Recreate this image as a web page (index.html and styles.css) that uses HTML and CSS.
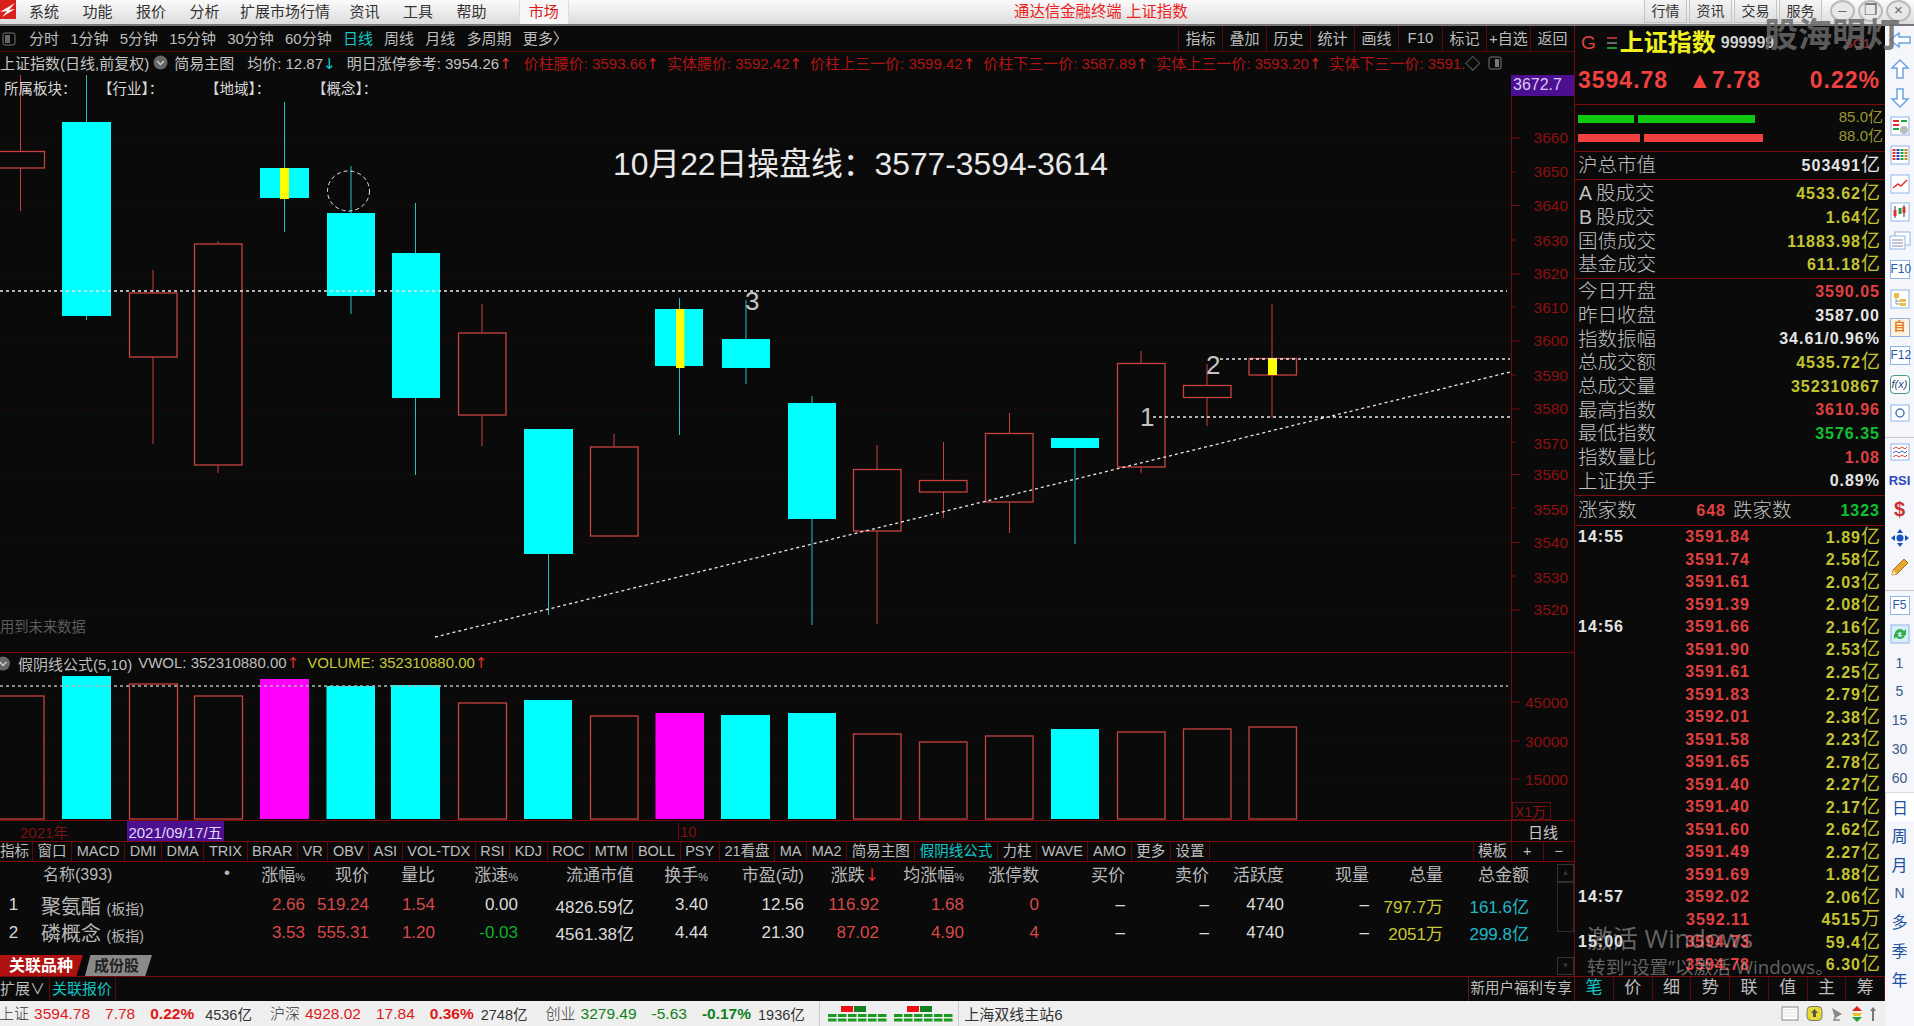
FILE: index.html
```html
<!DOCTYPE html>
<html lang="zh-CN">
<head>
  <meta charset="UTF-8" />
  <title>通达信金融终端 上证指数</title>
  <link rel="stylesheet" href="styles.css">
</head>
<body>
<div class="app">
  <header class="menubar">
    <svg class="logo" width="16" height="19" viewBox="0 0 16 19"><rect width="16" height="19" fill="#d8201c"/><path d="M0 12 L15 3 L9 10 L15 9 L2 17 L7 11 Z" fill="#fff"/></svg>
    <nav class="menu"><span>系统</span><span>功能</span><span>报价</span><span>分析</span><span class="wide">扩展市场行情</span><span>资讯</span><span>工具</span><span>帮助</span></nav>
    <span class="menu-tab">市场</span>
    <span class="app-title">通达信金融终端 上证指数</span>
    <div class="top-btns"><span>行情</span><span>资讯</span><span>交易</span><span>服务</span></div>
    <div class="win-btns"><i>–</i><i>❐</i><i>×</i></div>
  </header>

  <div class="workspace">
    <main class="left">
      <div class="toolbar">
        <svg class="panel-icon" width="14" height="14" viewBox="0 0 14 14"><rect x="1" y="1" width="12" height="12" rx="2" fill="none" stroke="#777"/><rect x="3" y="3" width="5" height="8" fill="#666"/></svg>
        <div class="periods"><span>分时</span><span>1分钟</span><span>5分钟</span><span>15分钟</span><span>30分钟</span><span>60分钟</span><span class="on">日线</span><span>周线</span><span>月线</span><span>多周期</span><span>更多〉</span></div>
        <div class="tools"><span>指标</span><span>叠加</span><span>历史</span><span>统计</span><span>画线</span><span>F10</span><span>标记</span><span>+自选</span><span>返回</span></div>
      </div>

      <div class="infobar">
        <span class="info-name">上证指数(日线,前复权)</span>
        <svg width="15" height="15" viewBox="0 0 15 15"><circle cx="7.5" cy="7.5" r="7" fill="#666"/><path d="M4 6 L7.5 9.5 L11 6" fill="none" stroke="#ccc" stroke-width="1.5"/></svg>
        <span class="info-main">简易主图</span>
        <span>均价: 12.87<b class="cyan">↓</b></span>
        <span class="info-ref">明日涨停参考: 3954.26<b class="red">↑</b></span>
        <span class="dim-red first">价柱腰价: 3593.66<b>↑</b></span>
        <span class="dim-red">实体腰价: 3592.42<b>↑</b></span>
        <span class="dim-red">价柱上三一价: 3599.42<b>↑</b></span>
        <span class="dim-red">价柱下三一价: 3587.89<b>↑</b></span>
        <span class="dim-red">实体上三一价: 3593.20<b>↑</b></span>
        <span class="dim-red cut">实体下三一价: 3591.</span>
        <span class="diamond">◇</span>
        <svg width="14" height="14" viewBox="0 0 14 14"><rect x="1" y="1" width="12" height="12" rx="2" fill="none" stroke="#777"/><rect x="7" y="3" width="4" height="8" fill="#777"/></svg>
        <span class="axis-price">3672.7</span>
      </div>

      <section class="pane-main">
        <div class="sectors"><span>所属板块：</span><span>【行业】：</span><span>【地域】：</span><span>【概念】：</span></div>
        <svg class="chart" width="1575" height="577" viewBox="0 75 1575 577">
          <g class="grid">
            <path d="M0 138H1511M0 205.5H1511M0 274H1511M0 341H1511M0 409H1511M0 474.5H1511M0 542.5H1511M0 610H1511"/>
          </g>
          <g class="axis">
            <path class="axis-line" d="M1511.5 75V652M1512 138h8M1512 172h4M1512 205.5h8M1512 240h4M1512 274h8M1512 307h4M1512 341h8M1512 375h4M1512 409h8M1512 442h4M1512 474.5h8M1512 508h4M1512 542.5h8M1512 576h4M1512 610h8"/>
            <text x="1568" y="143">3660</text><text x="1568" y="177">3650</text><text x="1568" y="211">3640</text><text x="1568" y="246">3630</text><text x="1568" y="279">3620</text><text x="1568" y="313">3610</text><text x="1568" y="346">3600</text><text x="1568" y="381">3590</text><text x="1568" y="414">3580</text><text x="1568" y="449">3570</text><text x="1568" y="480">3560</text><text x="1568" y="515">3550</text><text x="1568" y="548">3540</text><text x="1568" y="583">3530</text><text x="1568" y="615">3520</text>
          </g>
          <g class="wick-up">
            <path d="M20.5 75V151M20.5 168V211M153 270V293M153 357V444M218 241V244M218 465V473M482 304V333M482 415V446M614 434V447M877 445V469M877 531V624M943.5 442V480M943.5 492V518M1009.5 413V433M1009.5 502V533M1141 351V363M1141 467V473M1207 364V385M1207 397V426M1272 304V358M1272 375V418"/>
          </g>
          <g class="wick-down">
            <path d="M86.5 75V122M86.5 316V320M284.5 102V168M284.5 198V232M351 166V213M351 296V314M415.5 203V253M415.5 398V475M548.5 554V615M679.5 298V309M679.5 366V435M746 300V339M746 368V384M812 396V403M812 519V625M1075 447V544"/>
          </g>
          <g class="body-up">
            <rect x="-5" y="151.5" width="49.5" height="16.5"/><rect x="129.5" y="293" width="47.5" height="64"/><rect x="194.5" y="244" width="47.5" height="221"/><rect x="458.5" y="333" width="47.5" height="82"/><rect x="590.5" y="447" width="47.5" height="89"/><rect x="853.5" y="469.5" width="47.5" height="61.5"/><rect x="919.5" y="480.5" width="47.5" height="11.5"/><rect x="985.5" y="433.5" width="47.5" height="68.5"/><rect x="1117.5" y="363.5" width="47.5" height="103.5"/><rect x="1183.5" y="385.5" width="47.5" height="12"/><rect x="1249" y="358.5" width="47.5" height="16.5"/>
          </g>
          <g class="body-down">
            <rect x="62" y="122" width="49" height="194"/><rect x="260" y="168" width="49" height="30"/><rect x="327" y="213" width="48" height="83"/><rect x="392" y="253" width="48" height="145"/><rect x="524" y="429" width="49" height="125"/><rect x="655" y="309" width="48" height="57"/><rect x="722" y="339" width="48" height="29"/><rect x="788" y="403" width="48" height="116"/><rect x="1051" y="438" width="48" height="10"/>
          </g>
          <g class="mark">
            <rect x="280" y="168" width="9" height="31"/><rect x="676" y="309" width="8.5" height="59"/><rect x="1268" y="358" width="9" height="17"/>
          </g>
          <g class="dash">
            <path d="M0 291H1507M1220 359H1510M1153 417H1511M435 637L1510 372"/>
            <ellipse class="thin" cx="348.5" cy="191" rx="21" ry="20"/>
          </g>
          <text class="note" x="613" y="175">10月22日操盘线：3577-3594-3614</text>
          <g class="num"><text x="745" y="310">3</text><text x="1206" y="374">2</text><text x="1140" y="426">1</text></g>
        </svg>
        <span class="future">用到未来数据</span>
      </section>

      <section class="pane-sub">
        <div class="sub-head">
          <svg width="12" height="15" viewBox="0 0 12 15"><circle cx="3" cy="7.5" r="7" fill="#666"/><path d="M0 6 L3 9.5 L6.5 6" fill="none" stroke="#ccc" stroke-width="1.5"/></svg>
          <span>假阴线公式(5,10)</span>
          <span>VWOL: 352310880.00<b class="red">↑</b></span>
          <span class="olive">VOLUME: 352310880.00<b class="red">↑</b></span>
        </div>
        <svg class="chart" width="1575" height="167" viewBox="0 653 1575 167">
          <g class="grid"><path d="M0 702H1511M0 741H1511M0 779H1511"/></g>
          <g class="axis">
            <path class="axis-line" d="M1511.5 653V820M1512 702h8M1512 741h8M1512 779h8"/>
            <text x="1568" y="708">45000</text><text x="1568" y="747">30000</text><text x="1568" y="785">15000</text>
            <text class="unit" x="1515" y="817">X1万</text>
            <rect class="unit-box" x="1512.5" y="802.5" width="38" height="17"/>
          </g>
          <g class="body-up">
            <rect x="-5" y="696" width="49" height="123"/><rect x="129.5" y="684" width="48" height="135"/><rect x="194.5" y="696" width="48" height="123"/><rect x="458.5" y="703" width="48" height="116"/><rect x="590.5" y="716" width="47.5" height="103"/><rect x="853.5" y="734" width="47.5" height="85"/><rect x="919.5" y="742" width="47.5" height="77"/><rect x="985.5" y="736" width="47.5" height="83"/><rect x="1117.5" y="732" width="47.5" height="87"/><rect x="1183.5" y="729" width="47.5" height="90"/><rect x="1249" y="727" width="47.5" height="92"/>
          </g>
          <g class="body-down">
            <rect x="62" y="676" width="49" height="143"/><rect x="326.5" y="686" width="48.5" height="133"/><rect x="391" y="685" width="49" height="134"/><rect x="524" y="700" width="48" height="119"/><rect x="721" y="715" width="49" height="104"/><rect x="788" y="713" width="48" height="106"/><rect x="1051" y="729" width="48" height="90"/>
          </g>
          <g class="body-pink"><rect x="260" y="679" width="49" height="140"/><rect x="655.5" y="713" width="48.5" height="106"/></g>
          <path class="dash grey" d="M0 686H1508"/>
        </svg>
      </section>

      <div class="dates">
        <span class="year">2021年</span>
        <span class="cursor-date">2021/09/17/五</span>
        <span class="month">10</span>
        <span class="date-kind">日线</span>
      </div>

      <div class="tabs">
        <div class="tab-list">
          <span class="t-lead">指标</span><span>窗口</span><span>MACD</span><span>DMI</span><span>DMA</span><span>TRIX</span><span>BRAR</span><span>VR</span><span>OBV</span><span>ASI</span><span>VOL-TDX</span><span>RSI</span><span>KDJ</span><span>ROC</span><span>MTM</span><span>BOLL</span><span>PSY</span><span>21看盘</span><span>MA</span><span>MA2</span><span>简易主图</span><span class="on">假阴线公式</span><span>力柱</span><span>WAVE</span><span>AMO</span><span>更多</span><span>设置</span>
        </div>
        <div class="tab-right"><span>模板</span><span>+</span><span>−</span></div>
      </div>

      <div class="list">
        <div class="list-main">
          <div class="grid-table">
            <span class="th c">&nbsp;</span><span class="th name">名称(393)</span><span class="th">•</span><span class="th">涨幅<small>%</small></span><span class="th">现价</span><span class="th">量比</span><span class="th">涨速<small>%</small></span><span class="th">流通市值</span><span class="th">换手<small>%</small></span><span class="th">市盈(动)</span><span class="th">涨跌<b class="red">↓</b></span><span class="th">均涨幅<small>%</small></span><span class="th">涨停数</span><span class="th">买价</span><span class="th">卖价</span><span class="th">活跃度</span><span class="th">现量</span><span class="th">总量</span><span class="th">总金额</span>

            <span class="c">1</span><span class="name-cell">聚氨酯 <small>(板指)</small></span><span></span><span class="r">2.66</span><span class="r">519.24</span><span class="r">1.54</span><span class="w">0.00</span><span class="w">4826.59<i>亿</i></span><span class="w">3.40</span><span class="w">12.56</span><span class="r">116.92</span><span class="r">1.68</span><span class="r">0</span><span class="w">–</span><span class="w">–</span><span class="w">4740</span><span class="w">–</span><span class="y">797.7<i>万</i></span><span class="b">161.6<i>亿</i></span>

            <span class="c">2</span><span class="name-cell">磷概念 <small>(板指)</small></span><span></span><span class="r">3.53</span><span class="r">555.31</span><span class="r">1.20</span><span class="g">-0.03</span><span class="w">4561.38<i>亿</i></span><span class="w">4.44</span><span class="w">21.30</span><span class="r">87.02</span><span class="r">4.90</span><span class="r">4</span><span class="w">–</span><span class="w">–</span><span class="w">4740</span><span class="w">–</span><span class="y">2051<i>万</i></span><span class="b">299.8<i>亿</i></span>
          </div>
          <div class="rel-tabs"><span class="rel-on">关联品种</span><span class="rel-off">成份股</span></div>
        </div>
        <div class="scroll"><i>▲</i><em></em><i>▼</i></div>
      </div>

      <div class="extras">
        <span>扩展∨</span><span class="on">关联报价</span>
        <span class="promo">新用户福利专享</span>
      </div>
    </main>

    <aside class="quote">
      <div class="q-title">
        <span class="q-g">G</span>
        <svg width="12" height="14" viewBox="0 0 12 14"><path d="M1 2H11" stroke="#e04040" stroke-width="1.5"/><path d="M1 7H11" stroke="#888" stroke-width="1.5"/><path d="M1 12H11" stroke="#20c040" stroke-width="1.5"/></svg>
        <span class="q-name">上证指数</span>
        <span class="q-code">999999</span>
        <span class="q-tag">SG1</span>
      </div>
      <div class="q-price"><span>3594.78</span><span class="q-change">▲7.78</span><span>0.22%</span></div>
      <div class="q-bars">
        <div class="bar-row"><i class="green w56"></i><i class="green w117"></i><span>85.0<em>亿</em></span></div>
        <div class="bar-row"><i class="redbar w62"></i><i class="redbar w119"></i><span>88.0<em>亿</em></span></div>
      </div>
      <div class="q-sec one"><div class="q-row"><label>沪总市值</label><span class="wh">503491<em>亿</em></span></div></div>
      <div class="q-sec four">
        <div class="q-row"><label><tt>A</tt>股成交</label><span class="yl">4533.62<em>亿</em></span></div>
        <div class="q-row"><label><tt>B</tt>股成交</label><span class="yl">1.64<em>亿</em></span></div>
        <div class="q-row"><label>国债成交</label><span class="yl">11883.98<em>亿</em></span></div>
        <div class="q-row"><label>基金成交</label><span class="yl">611.18<em>亿</em></span></div>
      </div>
      <div class="q-sec nine">
        <div class="q-row"><label>今日开盘</label><span class="rd">3590.05</span></div>
        <div class="q-row"><label>昨日收盘</label><span class="wh">3587.00</span></div>
        <div class="q-row"><label>指数振幅</label><span class="wh">34.61/0.96%</span></div>
        <div class="q-row"><label>总成交额</label><span class="yl">4535.72<em>亿</em></span></div>
        <div class="q-row"><label>总成交量</label><span class="yl">352310867</span></div>
        <div class="q-row"><label>最高指数</label><span class="rd">3610.96</span></div>
        <div class="q-row"><label>最低指数</label><span class="gr">3576.35</span></div>
        <div class="q-row"><label>指数量比</label><span class="rd">1.08</span></div>
        <div class="q-row"><label>上证换手</label><span class="wh">0.89%</span></div>
      </div>
      <div class="q-sec updown"><label>涨家数</label><span class="rd">648</span><label class="fall">跌家数</label><span class="gr">1323</span></div>
      <div class="ticks">
        <div class="tick"><span>14:55</span><span>3591.84</span><span>1.89<em>亿</em></span></div>
        <div class="tick"><span></span><span>3591.74</span><span>2.58<em>亿</em></span></div>
        <div class="tick"><span></span><span>3591.61</span><span>2.03<em>亿</em></span></div>
        <div class="tick"><span></span><span>3591.39</span><span>2.08<em>亿</em></span></div>
        <div class="tick minute"><span>14:56</span><span>3591.66</span><span>2.16<em>亿</em></span></div>
        <div class="tick"><span></span><span>3591.90</span><span>2.53<em>亿</em></span></div>
        <div class="tick"><span></span><span>3591.61</span><span>2.25<em>亿</em></span></div>
        <div class="tick"><span></span><span>3591.83</span><span>2.79<em>亿</em></span></div>
        <div class="tick"><span></span><span>3592.01</span><span>2.38<em>亿</em></span></div>
        <div class="tick"><span></span><span>3591.58</span><span>2.23<em>亿</em></span></div>
        <div class="tick"><span></span><span>3591.65</span><span>2.78<em>亿</em></span></div>
        <div class="tick"><span></span><span>3591.40</span><span>2.27<em>亿</em></span></div>
        <div class="tick"><span></span><span>3591.40</span><span>2.17<em>亿</em></span></div>
        <div class="tick"><span></span><span>3591.60</span><span>2.62<em>亿</em></span></div>
        <div class="tick"><span></span><span>3591.49</span><span>2.27<em>亿</em></span></div>
        <div class="tick"><span></span><span>3591.69</span><span>1.88<em>亿</em></span></div>
        <div class="tick minute"><span>14:57</span><span>3592.02</span><span>2.06<em>亿</em></span></div>
        <div class="tick"><span></span><span>3592.11</span><span>4515<em>万</em></span></div>
        <div class="tick minute"><span>15:00</span><span>3594.73</span><span>59.4<em>亿</em></span></div>
        <div class="tick"><span></span><span>3594.78</span><span>6.30<em>亿</em></span></div>
      </div>
      <div class="q-tabs"><span class="on">笔</span><span>价</span><span>细</span><span>势</span><span>联</span><span>值</span><span>主</span><span>筹</span></div>
    </aside>

    <nav class="side">
      <a><svg width="24" height="20" viewBox="0 0 24 20"><path d="M2 10L11 3V7H22V13H11V17Z" fill="#fff" stroke="#6ea2e0" stroke-width="1.5"/></svg></a>
      <a><svg width="20" height="22" viewBox="0 0 20 22"><path d="M10 2L18 10H13V20H7V10H2Z" fill="#fff" stroke="#6ea2e0" stroke-width="1.5"/></svg></a>
      <a><svg width="20" height="22" viewBox="0 0 20 22"><path d="M10 20L18 12H13V2H7V12H2Z" fill="#fff" stroke="#6ea2e0" stroke-width="1.5"/></svg></a>
      <a><svg width="20" height="20" viewBox="0 0 20 20"><rect x="1" y="1" width="18" height="18" fill="#fff" stroke="#8fb4e8"/><path d="M3 5H9M3 9H9" stroke="#e03030" stroke-width="2"/><path d="M3 13H9M11 5H17" stroke="#20a040" stroke-width="2"/><circle cx="14" cy="14" r="4" fill="#bbb"/></svg></a>
      <a><svg width="20" height="20" viewBox="0 0 20 20"><rect x="1" y="1" width="18" height="18" fill="#fff" stroke="#8fb4e8"/><path d="M4 4V16" stroke="#e03030" stroke-width="3" stroke-dasharray="2 1"/><path d="M8 4V16" stroke="#2040c0" stroke-width="3" stroke-dasharray="2 1"/><path d="M12 4V16" stroke="#20a040" stroke-width="3" stroke-dasharray="2 1"/><path d="M16 4V16" stroke="#d08020" stroke-width="3" stroke-dasharray="2 1"/></svg></a>
      <a><svg width="20" height="20" viewBox="0 0 20 20"><rect x="1" y="1" width="18" height="18" fill="#fff" stroke="#8fb4e8"/><path d="M3 14L8 10L11 12L17 6" fill="none" stroke="#e03030" stroke-width="1.5"/></svg></a>
      <a><svg width="20" height="20" viewBox="0 0 20 20"><rect x="1" y="1" width="18" height="18" fill="#fff" stroke="#8fb4e8"/><path d="M5 4V16M14 3V15" stroke="#333"/><rect x="3.5" y="8" width="3" height="6" fill="#e03030"/><rect x="8.5" y="6" width="3" height="6" fill="#20a040"/><rect x="12.5" y="5" width="3" height="6" fill="#e03030"/></svg></a>
      <a><svg width="22" height="20" viewBox="0 0 22 20"><rect x="6" y="1" width="15" height="13" fill="#fff" stroke="#8fb4e8"/><rect x="1" y="5" width="15" height="13" fill="#fff" stroke="#8fb4e8"/><path d="M3 9H14M3 12H14M3 15H14" stroke="#88a" /></svg></a>
      <a><span class="ibox">F10</span></a>
      <a><svg width="20" height="20" viewBox="0 0 20 20"><rect x="1" y="1" width="18" height="18" fill="#fff" stroke="#8fb4e8"/><rect x="4" y="4" width="5" height="5" fill="#e8c040"/><path d="M6 9V15H10M6 12H10" fill="none" stroke="#999"/><rect x="10" y="10" width="6" height="3" fill="#e8c040"/><rect x="10" y="14" width="6" height="3" fill="#e8c040"/></svg></a>
      <a><span class="ibox zi">自</span></a>
      <a><span class="ibox">F12</span></a>
      <a><span class="ibox fx">f(x)</span></a>
      <a><svg width="20" height="18" viewBox="0 0 20 18"><rect x="1" y="1" width="18" height="16" fill="#fff" stroke="#8fb4e8"/><circle cx="10" cy="9" r="4" fill="none" stroke="#4a78b8" stroke-width="1.5"/></svg></a>
      <hr>
      <a><svg width="20" height="18" viewBox="0 0 20 18"><rect x="1" y="1" width="18" height="16" fill="#fff" stroke="#8fb4e8"/><path d="M3 6L6 4L9 6L12 4L15 6L17 4" fill="none" stroke="#e04040"/><path d="M3 10L6 8L9 10L12 8L15 10L17 8" fill="none" stroke="#4060c0"/><path d="M3 14L6 12L9 14L12 12L15 14L17 12" fill="none" stroke="#e04040"/></svg></a>
      <a class="rsi">RSI</a>
      <a class="dollar">$</a>
      <a><svg width="20" height="20" viewBox="0 0 20 20"><path d="M10 1L13 5H7ZM10 19L13 15H7ZM1 10L5 7V13ZM19 10L15 7V13Z" fill="#1a50c0"/><circle cx="10" cy="10" r="3.5" fill="#1a50c0"/></svg></a>
      <a><svg width="20" height="20" viewBox="0 0 20 20"><path d="M2 18L3 13L14 2L18 6L7 17Z" fill="#e8a830" stroke="#a87018"/><path d="M2 18L3 13L7 17Z" fill="#f6e0b0"/></svg></a>
      <hr>
      <a><span class="ibox">F5</span></a>
      <a><svg width="20" height="20" viewBox="0 0 20 20"><rect x="1" y="1" width="18" height="18" fill="#d8eef8" stroke="#8fb4e8"/><path d="M5 10A5 5 0 0 1 14 7L16 5V11H10L12 9A3 3 0 0 0 7 11Z" fill="#30b050"/><path d="M15 10A5 5 0 0 1 6 13L4 15V10H9L8 12A3 3 0 0 0 13 10Z" fill="#30b050"/></svg></a>
      <a class="p">1</a><a class="p">5</a><a class="p">15</a><a class="p">30</a><a class="p">60</a>
      <a class="p cn active">日</a><a class="p cn">周</a><a class="p cn">月</a><a class="p">N</a><a class="p cn">多</a><a class="p cn">季</a><a class="p cn">年</a>
    </nav>

    <footer class="status">
      <div class="idx first-idx"><label>上证</label><span class="r">3594.78</span><span class="r">7.78</span><b class="r">0.22%</b><em>4536亿</em></div>
      <div class="idx tight"><label>沪深</label><span class="r">4928.02</span><span class="r">17.84</span><b class="r">0.36%</b><em>2748亿</em></div>
      <div class="idx tight"><label>创业</label><span class="g">3279.49</span><span class="g">-5.63</span><b class="g">-0.17%</b><em>1936亿</em></div>
      <div class="meter">
        <svg width="126" height="16" viewBox="0 0 126 16">
          <g id="lvl"><rect x="13" y="0" width="12" height="6" fill="#ee1010"/><rect x="26" y="0" width="12" height="6" fill="#108020"/><path d="M0 9.5H59M0 14H59" stroke="#1a9a20" stroke-width="3" stroke-dasharray="8.5 1.5"/></g>
          <use href="#lvl" x="66"/>
        </svg>
      </div>
      <span class="station">上海双线主站6</span>
      <div class="tray">
        <svg width="18" height="15" viewBox="0 0 18 15"><rect x="1" y="1" width="16" height="13" fill="#fff" stroke="#888"/><path d="M1 4H17M1 7H17M1 10H17" stroke="#ddd"/></svg>
        <svg width="17" height="15" viewBox="0 0 17 15"><rect x="1" y="0.5" width="15" height="14" rx="4" fill="#e8d838" stroke="#777"/><path d="M8.5 3L12 7H10V11H7V7H5Z" fill="#554"/></svg>
        <svg width="14" height="15" viewBox="0 0 14 15"><path d="M2 2L12 8L5 12Z" fill="#888"/><path d="M6 9L4 14H10" fill="none" stroke="#888" stroke-width="1.5"/></svg>
        <svg width="12" height="16" viewBox="0 0 12 16"><path d="M6 0L11 5H1Z" fill="#e02020"/><path d="M1 7H11L9 10H3Z" fill="#e8c020"/><path d="M6 16L1 11H11Z" fill="#20a040"/></svg>
        <svg width="6" height="14" viewBox="0 0 6 14"><path d="M3 0L6 4H4V14H2V4H0Z" fill="#777"/></svg>
      </div>
    </footer>
  </div>

  <div class="watermark">股海明灯</div>
  <div class="activate"><p class="a1">激活 Windows</p><p class="a2">转到“设置”以激活 Windows。</p></div>
</div>
</body>
</html>
```

FILE: styles.css
```css
* {
  box-sizing: border-box;
}
body {
  margin: 0;
  background: #0a0a0a;
  font-family: "Liberation Sans", "Noto Sans CJK SC", sans-serif;
  color: #d8d8d8;
  overflow: hidden;
}
p {
  margin: 0;
}
.app {
  position: relative;
  width: 1914px;
  height: 1026px;
  overflow: hidden;
}

/* top menu */
.menubar {
  display: flex;
  align-items: center;
  height: 26px;
  background: linear-gradient(#fbfbfb, #dcdcdc);
  border-bottom: 2px solid #777;
  color: #333;
  font-size: 15px;
}
.logo {
  flex: none;
  align-self: flex-start;
}
.menu {
  display: flex;
  gap: 23.5px;
  margin-left: 13px;
  padding-bottom: 3px;
}
.menu .wide {
  margin: 0 -4px 0 -3px;
}
.menu-tab {
  display: flex;
  align-items: center;
  height: 24px;
  margin-left: 32px;
  padding: 0 9px 3px;
  background: #f8f8f8;
  border: 1px solid #ddd;
  border-width: 0 1px;
  color: #d81818;
}
.app-title {
  position: absolute;
  left: 1014px;
  top: -1px;
  color: #ee2020;
  font-size: 15.4px;
}
.top-btns {
  position: absolute;
  left: 1644px;
  top: 0;
  display: flex;
  gap: 2px;
}
.top-btns span {
  width: 43px;
  height: 23px;
  text-align: center;
  line-height: 22px;
  font-size: 14px;
  background: linear-gradient(#f4f4f4, #dedede);
  border: 1px solid #c4c4c4;
  border-top: 0;
}
.win-btns {
  position: absolute;
  left: 1830px;
  top: 0;
  display: flex;
  gap: 3px;
}
.win-btns i {
  width: 25px;
  height: 22px;
  border: 2px solid #bbb;
  border-radius: 50%;
  font-style: normal;
  text-align: center;
  line-height: 16px;
  font-size: 15px;
  color: #666;
  background: #e8e8e8;
}

/* layout */
.workspace {
  display: grid;
  grid-template-columns: 1575px 310px 29px;
  grid-template-rows: 975px 25px;
}
.left {
  grid-row: 1;
  grid-column: 1;
  display: flex;
  flex-direction: column;
  border-right: 1px solid #7a0b0b;
  min-width: 0;
}
.quote {
  grid-row: 1;
  grid-column: 2;
  display: flex;
  flex-direction: column;
}
.side {
  grid-row: 1 / 3;
  grid-column: 3;
}
.status {
  grid-row: 2;
  grid-column: 1 / 3;
}

/* toolbar */
.toolbar {
  display: flex;
  align-items: center;
  flex: none;
  height: 26px;
  border-bottom: 1px solid #5a0808;
  font-size: 15px;
  color: #bdbdbd;
}
.panel-icon {
  margin-left: 2px;
}
.periods {
  display: flex;
  gap: 11.2px;
  margin-left: 13px;
  padding-bottom: 2px;
}
.periods .on,
.tab-list .on,
.extras .on,
.q-tabs .on {
  color: #10c8c8;
}
.tools {
  display: grid;
  grid-template-columns: repeat(9, 44px);
  margin-left: auto;
  height: 100%;
}
.tools span {
  display: flex;
  align-items: center;
  justify-content: center;
  padding-bottom: 2px;
  border-left: 1px solid #5a0808;
}

.infobar {
  position: relative;
  display: flex;
  align-items: center;
  gap: 8px;
  flex: none;
  height: 23px;
  padding: 0 68px 2px 0;
  font-size: 15px;
  white-space: nowrap;
  color: #c4c4c4;
}
.infobar svg {
  flex: none;
}
.info-name {
  margin-right: -4px;
}
.info-main {
  margin-left: -2px;
  margin-right: 5px;
}
.info-ref {
  margin-left: 3px;
}
.infobar .first {
  margin-left: 4px;
}
.infobar b,
.sub-head b,
.th b {
  font-weight: normal;
  font-family: "DejaVu Sans", sans-serif;
}
.red {
  color: #e03030;
}
.cyan {
  color: #10d0d0;
}
.olive {
  color: #c8c832;
}
.dim-red {
  color: #b01414;
}
.dim-red b {
  color: #d02020;
}
.diamond {
  margin-left: -8px;
  color: #888;
}
.axis-price {
  position: absolute;
  right: 0;
  top: 23px;
  z-index: 2;
  width: 63px;
  height: 21px;
  padding-left: 2px;
  background: #4b0f8f;
  color: #d8c8f8;
  font-size: 16px;
  line-height: 20px;
}

/* chart panes */
.pane-main,
.pane-sub {
  position: relative;
  flex: none;
  border-bottom: 1px solid #7a0b0b;
}
.pane-main {
  height: 578px;
}
.pane-sub {
  height: 168px;
}
.chart {
  display: block;
}
.grid path {
  fill: none;
  stroke: #4a0c0c;
  stroke-dasharray: 1 4;
}
.axis-line {
  fill: none;
  stroke: #7a0b0b;
}
.axis text {
  fill: #8c1010;
  font-size: 15.5px;
  text-anchor: end;
}
.axis .unit {
  text-anchor: start;
  font-size: 14px;
}
.unit-box {
  fill: none;
  stroke: #5a1010;
}
.wick-up path {
  fill: none;
  stroke: #c84040;
}
.wick-down path {
  fill: none;
  stroke: #1cc4c4;
}
.body-up rect {
  fill: #0a0a0a;
  stroke: #c84040;
  stroke-width: 1.3;
}
.body-down rect {
  fill: #00ffff;
}
.body-pink rect {
  fill: #ff00ff;
}
.mark rect {
  fill: #ffff00;
}
.dash path,
.dash.grey {
  fill: none;
  stroke: #e8e8e8;
  stroke-width: 1.3;
  stroke-dasharray: 3 3;
}
.dash.grey {
  stroke: #b4b4b4;
}
.dash .thin {
  fill: none;
  stroke: #e8e8e8;
  stroke-dasharray: 4 3;
}
.note {
  fill: #e8e8e8;
  font-size: 31.8px;
}
.num text {
  fill: #c4c4c4;
  font-size: 26px;
}
.sectors {
  position: absolute;
  left: 4px;
  top: 2px;
  display: flex;
  color: #d8d8d8;
  font-size: 14.5px;
}
.sectors span {
  width: 107px;
}
.sectors span:first-child {
  width: 94px;
}
.future {
  position: absolute;
  left: 0;
  top: 540px;
  color: #5c5c5c;
  font-size: 14.3px;
}
.sub-head {
  position: absolute;
  left: 0;
  top: 0;
  display: flex;
  align-items: center;
  gap: 6px;
  height: 20px;
  font-size: 15px;
  color: #bfbfbf;
}
.sub-head .olive {
  margin-left: 2px;
}

.dates {
  display: flex;
  align-items: center;
  flex: none;
  height: 20px;
  font-size: 15px;
  color: #7d1010;
}
.year {
  margin-left: 20px;
  width: 107px;
}
.cursor-date {
  width: 97px;
  height: 20px;
  background: #4b0f8f;
  color: #e0d8f8;
  white-space: nowrap;
  text-align: center;
}
.month {
  margin-left: 454px;
  padding-left: 1px;
  border-left: 1px solid #7a0b0b;
}
.date-kind {
  margin-left: auto;
  width: 63px;
  height: 20px;
  border-left: 1px solid #7a0b0b;
  color: #c8c8c8;
  text-align: center;
}

.tabs {
  display: flex;
  justify-content: space-between;
  flex: none;
  height: 21px;
  border-top: 1px solid #7a0b0b;
  border-bottom: 1px solid #7a0b0b;
  font-size: 14.5px;
  line-height: 19px;
  color: #bdbdbd;
  white-space: nowrap;
}
.tab-list,
.tab-right {
  display: flex;
}
.tab-list span {
  padding: 0 4.6px;
  border-right: 1px solid #5a0808;
}
.tab-list .t-lead {
  padding: 0 3px 0 0;
}
.tab-right span {
  width: 31.5px;
  text-align: center;
  border-left: 1px solid #5a0808;
}
.tab-right span:first-child {
  width: 38px;
}

/* list */
.list {
  display: flex;
  flex: none;
  height: 115px;
  border-bottom: 1px solid #7a0b0b;
}
.list-main {
  flex: 1;
  display: flex;
  flex-direction: column;
  justify-content: space-between;
}
.grid-table {
  display: grid;
  grid-template-columns: 30px 150px 50px 75px 64px 66px 83px 116px 74px 96px 75px 85px 75px 86px 84px 75px 85px 74px 86px;
  grid-template-rows: 29px 28px 27px;
  align-items: center;
  font-size: 17px;
  text-align: right;
  white-space: nowrap;
}
.grid-table i {
  font-style: normal;
}
.th {
  margin-bottom: 7px;
  color: #b8b8b8;
}
.th small {
  font-size: 11px;
}
.grid-table .name {
  text-align: left;
  padding-left: 13px;
  font-size: 16px;
}
.grid-table .c {
  text-align: center;
  color: #d8d8d8;
  padding-right: 3px;
}
.name-cell {
  padding-left: 11px;
  text-align: left;
  font-size: 20px;
  color: #b8b8b8;
}
.name-cell small {
  font-size: 14px;
}
.grid-table .r {
  color: #d84848;
}
.grid-table .w {
  color: #dcdcdc;
}
.grid-table .g {
  color: #10b030;
}
.grid-table .y {
  color: #c8c832;
}
.grid-table .b {
  color: #20b8c8;
}
.rel-tabs {
  display: flex;
  gap: 2px;
  height: 21px;
  font-size: 15px;
  font-weight: bold;
  line-height: 21px;
}
.rel-on,
.rel-off {
  padding: 0 12px 0 9px;
  white-space: nowrap;
  clip-path: polygon(0 0, 100% 0, 92% 100%, 0 100%);
}
.rel-on {
  width: 83px;
  padding-right: 0;
  background: #b01212;
  color: #fff;
  font-size: 16px;
}
.rel-off {
  width: 67px;
  background: #8a8a8a;
  color: #222;
  clip-path: polygon(8% 0, 100% 0, 90% 100%, 0 100%);
}
.scroll {
  flex: none;
  display: flex;
  flex-direction: column;
  width: 17px;
  padding: 2px 0 1px;
}
.scroll i {
  height: 18px;
  border: 1px solid #333;
  color: #333;
  font-size: 8px;
  font-style: normal;
  line-height: 16px;
  text-align: center;
}
.scroll em {
  height: 50px;
  border: 1px solid #2a2a2a;
  margin-bottom: auto;
}
.extras {
  display: flex;
  align-items: stretch;
  flex: 1;
  font-size: 15px;
  line-height: 23px;
  color: #bdbdbd;
}
.extras span {
  padding: 0 4px 0 0;
  border-right: 1px solid #5a0808;
}
.extras .on {
  padding: 0 3px 0 2px;
}
.extras .promo {
  margin-left: auto;
  padding: 0 2px;
  border-right: 0;
  border-left: 1px solid #7a0b0b;
  font-size: 14.5px;
}

/* quote panel */
.q-title {
  display: flex;
  align-items: center;
  flex: none;
  height: 34px;
  padding-left: 6px;
}
.q-g {
  color: #e04040;
  font-size: 19px;
  margin-right: 10px;
}
.q-name {
  margin-left: 2px;
  color: #f0f020;
  font-size: 24px;
  font-weight: bold;
  line-height: 34px;
}
.q-code {
  margin-left: 5px;
  font-size: 16px;
  font-weight: bold;
  color: #d0d0d0;
}
.q-tag {
  margin-left: 70px;
  color: #803030;
  font-size: 13px;
  font-weight: bold;
}
.q-price {
  display: flex;
  justify-content: space-between;
  align-items: center;
  flex: none;
  height: 45px;
  padding: 0 5px 4px 3px;
  border-bottom: 1px solid #7a0b0b;
  color: #f04040;
  font-size: 23px;
  font-weight: bold;
  letter-spacing: 1px;
}
.q-change {
  margin-right: 29px;
}
.q-bars {
  flex: none;
  height: 47px;
  padding: 4px 2px 0 3px;
  border-bottom: 1px solid #7a0b0b;
}
.bar-row {
  position: relative;
  display: flex;
  gap: 4px;
  align-items: center;
  height: 19px;
}
.bar-row i {
  height: 8px;
}
.bar-row span {
  margin-left: auto;
  margin-bottom: 4px;
  color: #989830;
  font-size: 15px;
  line-height: 15px;
}
.bar-row em {
  font-style: normal;
}
.green {
  background: #10c810;
}
.redbar {
  background: #f04040;
}
.w56 { width: 56px; }
.w117 { width: 117px; }
.w62 { width: 62px; }
.w119 { width: 119px; }
.q-sec {
  flex: none;
  padding: 0 5px 0 3px;
  border-bottom: 1px solid #7a0b0b;
}
.one {
  height: 28px;
  padding-top: 2px;
}
.four {
  height: 99px;
  padding-top: 2px;
}
.nine {
  height: 217px;
  padding-top: 1px;
}
.q-row {
  display: flex;
  justify-content: space-between;
  align-items: center;
  height: 23.7px;
}
label {
  color: #c0c0c0;
  font-size: 19.5px;
  line-height: 23px;
  font-weight: 300;
}
label tt {
  font-family: "Liberation Sans", sans-serif;
  padding: 0 4px 0 1px;
}
.q-row span,
.updown span,
.tick span {
  font-size: 16px;
  font-weight: bold;
  letter-spacing: 1px;
  line-height: 20px;
}
.q-sec em,
.tick em {
  font-style: normal;
  font-weight: normal;
  font-size: 19px;
  letter-spacing: 0;
  line-height: 1;
}
.wh { color: #e4e4e4; }
.yl { color: #c4c430; }
.rd { color: #e04040; }
.gr { color: #10c030; }
.updown {
  display: grid;
  grid-template-columns: 60px 88px 7px 60px 1fr;
  align-items: center;
  height: 30px;
}
.updown span { text-align: right; }
.updown .fall { grid-column: 4; }
.ticks {
  flex: none;
  height: 451px;
  padding-left: 3px;
  border-bottom: 1px solid #7a0b0b;
}
.tick {
  display: grid;
  grid-template-columns: 100px 72px 130px;
  align-items: center;
  height: 22.5px;
  text-align: right;
}
.tick span:first-child {
  color: #e4e4e4;
  text-align: left;
}
.tick span:nth-child(2) {
  color: #e04040;
}
.tick span:nth-child(3) {
  color: #c4c430;
}
.q-tabs {
  display: grid;
  grid-template-columns: repeat(8, 38.75px);
  flex: 1;
  align-items: center;
  font-size: 17px;
  line-height: 22px;
  color: #bdbdbd;
  text-align: center;
}
.q-tabs span {
  border-right: 1px solid #5a0808;
  height: 100%;
}

/* right icons */
.side {
  display: flex;
  flex-direction: column;
  align-items: center;
  background: #f4f6fb;
  color: #2f5a9c;
}
.side a {
  flex: none;
  display: flex;
  align-items: center;
  justify-content: center;
  width: 100%;
  height: 28.7px;
}
.side hr {
  flex: none;
  width: 100%;
  height: 10px;
  margin: 0;
  border: 0;
  border-bottom: 1px solid #c8c8c8;
}
.ibox {
  width: 20px;
  height: 19px;
  border: 1px solid #8fb4e8;
  background: #fff;
  color: #2a5aa8;
  font-size: 12px;
  line-height: 17px;
  text-align: center;
}
.ibox.zi {
  color: #e87820;
  background: #fff3e0;
  font-weight: bold;
}
.ibox.fx {
  border: 1.5px solid #4a9a80;
  border-radius: 4px;
  color: #204a80;
  font-size: 11px;
  font-style: italic;
}
.rsi {
  color: #3048b8;
  font-weight: bold;
  font-size: 13px;
}
.dollar {
  color: #c83030;
  font-weight: bold;
  font-size: 20px;
}
.side .p {
  font-size: 14px;
  color: #3a5a8c;
}
.side .cn {
  font-size: 16px;
  color: #2050a0;
}
.side .active {
  height: 29px;
  background: #fff;
  border: 1px solid #ddd;
  border-width: 1px 0 0 1px;
}

/* status bar */
.status {
  display: flex;
  align-items: center;
  background: #efefef;
  color: #333;
  font-size: 15.5px;
  white-space: nowrap;
}
.idx {
  display: flex;
  align-items: center;
  gap: 15px;
  margin-left: 18px;
}
.first-idx {
  margin-left: -1px;
}
.idx label {
  margin-right: -10px;
  font-size: 15px;
  color: #333;
}
.idx em {
  margin-left: -4px;
  font-style: normal;
  font-size: 14.5px;
  color: #333;
}
.idx.tight em {
  margin-left: -8px;
}
.idx .r {
  color: #e01818;
}
.idx .g {
  color: #108020;
}
.meter {
  display: flex;
  margin-left: 14.5px;
  padding: 0 4px 0 8px;
  border: 1px solid #ccc;
  border-width: 0 1px;
  height: 25px;
  align-items: center;
}
.station {
  margin-left: 5px;
  font-size: 15px;
}
.tray {
  display: flex;
  align-items: center;
  gap: 7px;
  margin-left: auto;
  margin-right: 9px;
}

/* overlays */
.watermark {
  position: absolute;
  left: 1764px;
  top: 13px;
  color: rgba(105, 105, 105, 0.85);
  font-size: 34px;
  font-weight: bold;
  line-height: 44px;
  white-space: nowrap;
}
.activate {
  position: absolute;
  left: 1587px;
  top: 920px;
  color: rgba(190, 190, 190, 0.5);
  white-space: nowrap;
  font-family: "Open Sans", "Noto Sans CJK SC", sans-serif;
}
.a1 {
  font-size: 25.5px;
  line-height: 36px;
}
.a2 {
  font-size: 18.7px;
  line-height: 22px;
}
```
